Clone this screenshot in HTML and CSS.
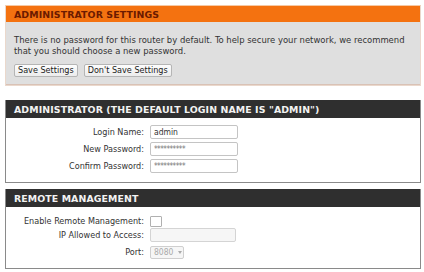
FILE: index.html
```html
<!DOCTYPE html>
<html>
<head>
<meta charset="utf-8">
<link rel="stylesheet" href="styles.css">
</head>
<body>
<div class="page">
  <section class="box box-orange">
    <h2 class="hdr hdr-orange">ADMINISTRATOR SETTINGS</h2>
    <div class="body-grey">
      <p class="intro">There is no password for this router by default. To help secure your network, we recommend that you should choose a new password.</p>
      <div class="btns">
        <button class="btn">Save Settings</button>
        <button class="btn">Don't Save Settings</button>
      </div>
    </div>
  </section>

  <section class="box box-dark">
    <h2 class="hdr hdr-dark">ADMINISTRATOR (THE DEFAULT LOGIN NAME IS "ADMIN")</h2>
    <div class="rows rows-admin">
      <div class="row"><label class="lbl">Login Name:</label><input class="inp" type="text" value="admin"></div>
      <div class="row"><label class="lbl">New Password:</label><input class="inp pw" type="text" value="**********"></div>
      <div class="row"><label class="lbl">Confirm Password:</label><input class="inp pw" type="text" value="**********"></div>
    </div>
  </section>

  <section class="box box-dark box-remote">
    <h2 class="hdr hdr-dark">REMOTE MANAGEMENT</h2>
    <div class="rows rows-remote">
      <div class="row"><label class="lbl">Enable Remote Management:</label><span class="chk"></span></div>
      <div class="row"><label class="lbl">IP Allowed to Access:</label><span class="inp inp-dis"></span></div>
      <div class="row row-port"><label class="lbl">Port:</label><span class="sel">8080<span class="arrow"></span></span></div>
    </div>
  </section>
</div>
</body>
</html>
```

FILE: styles.css
```css
html, body {
  margin: 0;
  padding: 0;
  background: #ffffff;
}
.page {
  padding: 5px 3px 0 5px;
  font-family: "DejaVu Sans Condensed", "DejaVu Sans", sans-serif;
  font-size: 9.4px;
  color: #333;
}
.box {
  margin: 0;
}
.hdr {
  margin: 0;
  font-family: "DejaVu Sans", sans-serif;
  font-weight: bold;
  font-size: 9.4px;
  letter-spacing: 0.1px;
  padding-left: 8px;
  display: flex;
  align-items: center;
}
.box-orange {
  border: 1px solid #ead8cc;
  border-top: 1px solid #f6c9a4;
}
.hdr-orange {
  height: 16px;
  background: #f47210;
  color: #6b1a00;
}
.body-grey {
  background: #dfdfdf;
  padding: 12px 8px 7px 8px;
  border-bottom: 1px solid #d9c2b6;
}
.intro {
  margin: 0;
  line-height: 11px;
  color: #333;
  width: 400px;
}
.btns {
  display: flex;
  gap: 6px;
  margin-top: 8px;
}
.btn {
  font-family: "DejaVu Sans Condensed", "DejaVu Sans", sans-serif;
  font-size: 9px;
  color: #222;
  height: 13px;
  padding: 0 3px;
  border: 1px solid #b5b5b5;
  border-radius: 2px;
  background: linear-gradient(#fdfdfd, #ececec);
  line-height: 11px;
}
.box-dark {
  margin-top: 14px;
  border: 1px solid #8a8a8a;
  border-top: none;
}
.box-remote {
  margin-top: 6px;
}
.hdr-dark {
  height: 18px;
  background: #2f2f2f;
  color: #f2f2f2;
}
.rows {
  display: flex;
  flex-direction: column;
  background: #fff;
}
.rows-admin {
  padding: 7px 0 9px 0;
  gap: 3px;
}
.rows-remote {
  padding: 7px 0 9px 0;
  gap: 0;
}
.row-port {
  margin-top: 3px;
}
.row {
  display: flex;
  align-items: center;
  gap: 6px;
  height: 14px;
}
.lbl {
  width: 138px;
  text-align: right;
  white-space: nowrap;
  font-size: 9px;
  color: #333;
}
.inp {
  box-sizing: border-box;
  width: 88px;
  height: 14px;
  border: 1px solid #c4c4c4;
  border-radius: 2px;
  padding: 0 3px;
  font-family: "DejaVu Sans Condensed", "DejaVu Sans", sans-serif;
  font-size: 8.5px;
  color: #333;
  background: #fff;
  outline: none;
}
.pw {
  color: #777;
  font-size: 8px;
  letter-spacing: -0.5px;
}
.inp-dis {
  display: block;
  width: 86px;
  background: #f6f6f6;
  border-color: #d4d4d4;
}
.chk {
  display: block;
  width: 10px;
  height: 9px;
  border: 1px solid #b0b0b0;
  border-radius: 1px;
  background: #fff;
}
.sel {
  box-sizing: border-box;
  display: flex;
  align-items: center;
  width: 34px;
  height: 13px;
  border: 1px solid #cfcfcf;
  border-radius: 2px;
  padding-left: 3px;
  font-size: 8.5px;
  color: #aaa;
  background: #f6f6f6;
  gap: 5px;
}
.arrow {
  width: 0;
  height: 0;
  border-left: 2.5px solid transparent;
  border-right: 2.5px solid transparent;
  border-top: 3px solid #aaa;
}
```
